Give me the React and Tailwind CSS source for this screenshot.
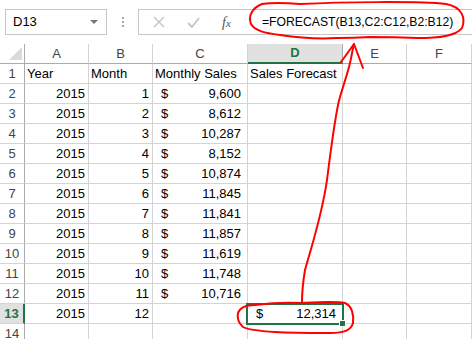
import React from "react"

const cols = "grid grid-cols-[25px_64px_64px_95px_95px_64px_1fr]"

const data = [
    [2015, 1, "9,600"],
    [2015, 2, "8,612"],
    [2015, 3, "10,287"],
    [2015, 4, "8,152"],
    [2015, 5, "10,874"],
    [2015, 6, "11,845"],
    [2015, 7, "11,841"],
    [2015, 8, "11,857"],
    [2015, 9, "11,619"],
    [2015, 10, "11,748"],
    [2015, 11, "10,716"],
]

function Cell({children, className = ""}){
    return (
        <div className={`h-[20px] border-r border-b border-[#d4d4d4] flex items-center whitespace-nowrap ${className}`}>
            {children}
        </div>
    )
}

function RowHead({n, active}){
    return active
        ? <div className="h-[20px] border-b border-[#d4d4d4] border-r-2 border-r-[#217346] bg-[#e1e1e1] flex items-center justify-center font-bold text-[#217346]">{n}</div>
        : <div className="h-[20px] border-b border-[#d4d4d4] border-r border-r-[#ababab] flex items-center justify-center text-[#444]">{n}</div>
}

function Money({v}){
    return (
        <Cell className="justify-between pl-[8px] pr-[6px]">
            <span>$</span>
            <span>{v}</span>
        </Cell>
    )
}

export default function App(){
    return (
        <div className="relative w-[472px] h-[339px] overflow-hidden bg-white text-[13px] text-black" style={{fontFamily: '"Liberation Sans", Arial, sans-serif'}}>
            {/* formula bar */}
            <div className="h-[44px] flex items-start pt-[9px]">
                <div className="ml-[5px] w-[102px] h-[26px] border border-[#c6c6c6] flex items-center justify-between pl-[7px] pr-[8px]">
                    <span>D13</span>
                    <svg width="8" height="5" viewBox="0 0 8 5"><path d="M0 0h8L4 4z" fill="#777"/></svg>
                </div>
                <div className="w-[31px] h-[26px] flex flex-col items-center justify-center gap-[2px]">
                    <div className="w-[2px] h-[2px] bg-[#a8a8a8]"></div>
                    <div className="w-[2px] h-[2px] bg-[#a8a8a8]"></div>
                    <div className="w-[2px] h-[2px] bg-[#a8a8a8]"></div>
                </div>
                <div className="flex-1 h-[26px] border border-r-0 border-[#c6c6c6] flex items-center">
                    <div className="w-[108px] flex items-center pl-[14px] gap-[22px]">
                        <svg width="12" height="12" viewBox="0 0 12 12"><path d="M1 1l10 10M11 1L1 11" stroke="#c4c4c4" strokeWidth="1.4"/></svg>
                        <svg width="13" height="11" viewBox="0 0 13 11"><path d="M1 6l4 4 7-9" stroke="#c4c4c4" strokeWidth="1.8" fill="none"/></svg>
                        <span className="italic text-[#555] text-[14px]" style={{fontFamily: '"Liberation Serif", serif'}}>f<span className="text-[11px]">x</span></span>
                    </div>
                    <span className="ml-[15px] text-[12.2px]">=FORECAST(B13,C2:C12,B2:B12)</span>
                </div>
            </div>

            {/* column headers */}
            <div className={cols}>
                <div className="h-[20px] border-r border-b border-[#ababab] flex items-end justify-end pr-[2px] pb-[3px]">
                    <svg width="13" height="13" viewBox="0 0 13 13"><path d="M13 0V13H0z" fill="#dadada"/></svg>
                </div>
                {["A", "B", "C"].map(c => (
                    <div key={c} className="h-[20px] border-r border-[#d4d4d4] border-b border-b-[#ababab] flex items-center justify-center text-[#444]">{c}</div>
                ))}
                <div className="h-[20px] border-r border-[#ababab] border-b-2 border-b-[#217346] bg-[#e1e1e1] flex items-center justify-center font-bold text-[#217346]">D</div>
                {["E", "F"].map(c => (
                    <div key={c} className="h-[20px] border-r border-[#d4d4d4] border-b border-b-[#ababab] flex items-center justify-center text-[#444]">{c}</div>
                ))}
            </div>

            {/* row 1 */}
            <div className={cols}>
                <RowHead n={1}/>
                <Cell className="pl-[2px]">Year</Cell>
                <Cell className="pl-[2px]">Month</Cell>
                <Cell className="pl-[2px]">Monthly Sales</Cell>
                <Cell className="pl-[2px]">Sales Forecast</Cell>
                <Cell/>
                <Cell/>
            </div>

            {data.map((r, i) => (
                <div className={cols} key={i}>
                    <RowHead n={i + 2}/>
                    <Cell className="justify-end pr-[3px]">{r[0]}</Cell>
                    <Cell className="justify-end pr-[3px]">{r[1]}</Cell>
                    <Money v={r[2]}/>
                    <Cell/>
                    <Cell/>
                    <Cell/>
                </div>
            ))}

            {/* row 13 */}
            <div className={cols}>
                <RowHead n={13} active/>
                <Cell className="justify-end pr-[3px]">2015</Cell>
                <Cell className="justify-end pr-[3px]">12</Cell>
                <Cell/>
                <div className="relative">
                    <Money v="12,314"/>
                    <div className="absolute -left-[2px] -top-[1px] w-[98px] h-[22px] border-2 border-[#217346]"></div>
                    <div className="absolute left-[91px] top-[16px] w-[7px] h-[7px] bg-[#217346] border border-white"></div>
                </div>
                <Cell/>
                <Cell/>
            </div>

            <div className={cols}>
                <RowHead n={14}/>
                <Cell/><Cell/><Cell/><Cell/><Cell/><Cell/>
            </div>

            {/* red annotation */}
            <svg className="absolute left-0 top-0 pointer-events-none" width="472" height="339" viewBox="0 0 472 339" fill="none" stroke="#ff0000" strokeWidth="2" strokeLinecap="round" strokeLinejoin="round">
                <path d="M300 4 C340 2 420 1 446 4 C462 7 466 18 462 28 C456 36 440 38 417 38 C395 37 380 37 370 37 C355 38 345 38 337 38 C320 39 300 38 280 35 C265 33 255 31 251 24 C248 16 252 8 262 4 C275 2 288 3 300 4"/>
                <path d="M341 62 L354 44 L363 68"/>
                <path d="M354 44 C352 52 351 60 349 67 C346 78 342 90 340 97 C336 110 332 140 327 180 C322 215 312 245 305 270 C303 282 302 292 302 302"/>
                <path d="M302 303 C320 302 335 301 345 303 C352 306 354 315 353 323 C351 330 345 333 330 333 C310 333 290 333 275 332 C260 331 248 330 243 327 C238 323 237 317 238 313 C240 307 248 305 255 305 C270 303 285 302 302 303"/>
            </svg>
        </div>
    )
}
